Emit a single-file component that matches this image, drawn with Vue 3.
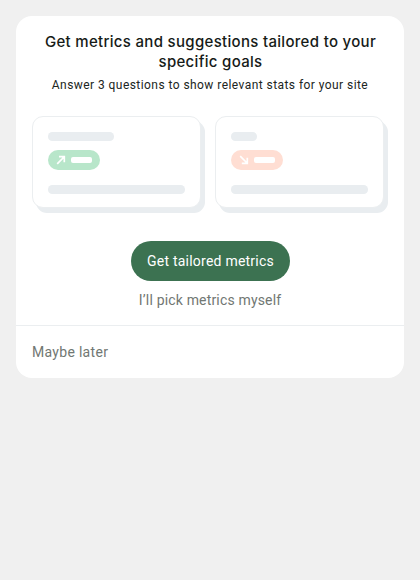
<script setup>
const stats = [
  { trend: 'up', label: 66, arrow: 'M1.2 8.8 8 2M3 1.7H8.3V7.2' },
  { trend: 'down', label: 26, arrow: 'M1.2 1.2 8 8M2.8 8.3H8.3V2.8' },
]
</script>

<template>
  <main class="page">
    <section class="card">
      <div class="content">
        <h1 class="title">Get metrics and suggestions tailored to your<br>specific goals</h1>
        <p class="subtitle">Answer 3 questions to show relevant stats for your site</p>
        <div class="stats" aria-hidden="true">
          <div v-for="stat in stats" :key="stat.trend" class="stat">
            <div class="bar" :style="{ width: stat.label + 'px' }"></div>
            <div class="pill" :class="stat.trend">
              <svg width="10" height="10" viewBox="0 0 10 10"><path :d="stat.arrow" /></svg>
              <span class="value"></span>
            </div>
            <div class="bar wide"></div>
          </div>
        </div>
        <div class="actions">
          <button class="primary">Get tailored metrics</button>
          <button class="link">I’ll pick metrics myself</button>
        </div>
      </div>
      <footer class="footer"><button class="link later">Maybe later</button></footer>
    </section>
  </main>
</template>

<style>
body { background: #f0f0f0; }
</style>

<style scoped>
.page { padding: 16px; font-family: Roboto, "Liberation Sans", sans-serif; }
.card { height: 362px; box-sizing: border-box; background: #fff; border-radius: 16px; display: flex; flex-direction: column; }
.content { padding: 16px 16px 0; height: 309px; box-sizing: border-box; }
.title { margin: 0; padding-left: 1px; text-align: center; font-family: Inter, sans-serif; font-size: 15px; line-height: 20px; font-weight: 500; letter-spacing: .31px; color: #161b18; white-space: nowrap; }
.subtitle { margin: 5px 0 0; text-align: center; font-size: 12px; line-height: 16px; letter-spacing: .44px; color: #202522; white-space: nowrap; }
.stats { display: flex; gap: 14px; margin-top: 23px; }
.stat { width: 169px; height: 92px; box-sizing: border-box; padding: 15px; background: #fff; border: 1px solid #ebeef0; border-radius: 11px; box-shadow: 4px 5px 0 #e9edf0; }
.bar { height: 8.5px; border-radius: 4.25px; background: #e9edf0; }
.wide { width: 136.5px; margin-top: 15px; }
.pill { width: 51.6px; height: 20px; box-sizing: border-box; margin-top: 9.5px; padding: 0 8px; border-radius: 10px; display: flex; align-items: center; gap: 5px; }
.up { background: #b8e6ca; }
.down { background: #ffded3; }
.pill svg { flex: none; fill: none; stroke: #fff; stroke-width: 1.7; }
.value { width: 20.7px; height: 6px; flex: none; border-radius: 2px; background: #fff; }
.actions { display: flex; flex-direction: column; align-items: center; margin-top: 33px; }
button { border: 0; padding: 0; font: 400 14px/20px Roboto, sans-serif; letter-spacing: .23px; white-space: nowrap; }
.primary { width: 159px; height: 40px; padding-left: 1px; border-radius: 20px; color: #fff; background: #3c7251; }
.link { background: none; color: #717773; }
.actions .link { margin-top: 9px; letter-spacing: .17px; }
.later { letter-spacing: .3px; }
.footer { height: 53px; box-sizing: border-box; border-top: 1px solid #ebeef0; padding: 0 16px; display: flex; align-items: center; }
</style>
